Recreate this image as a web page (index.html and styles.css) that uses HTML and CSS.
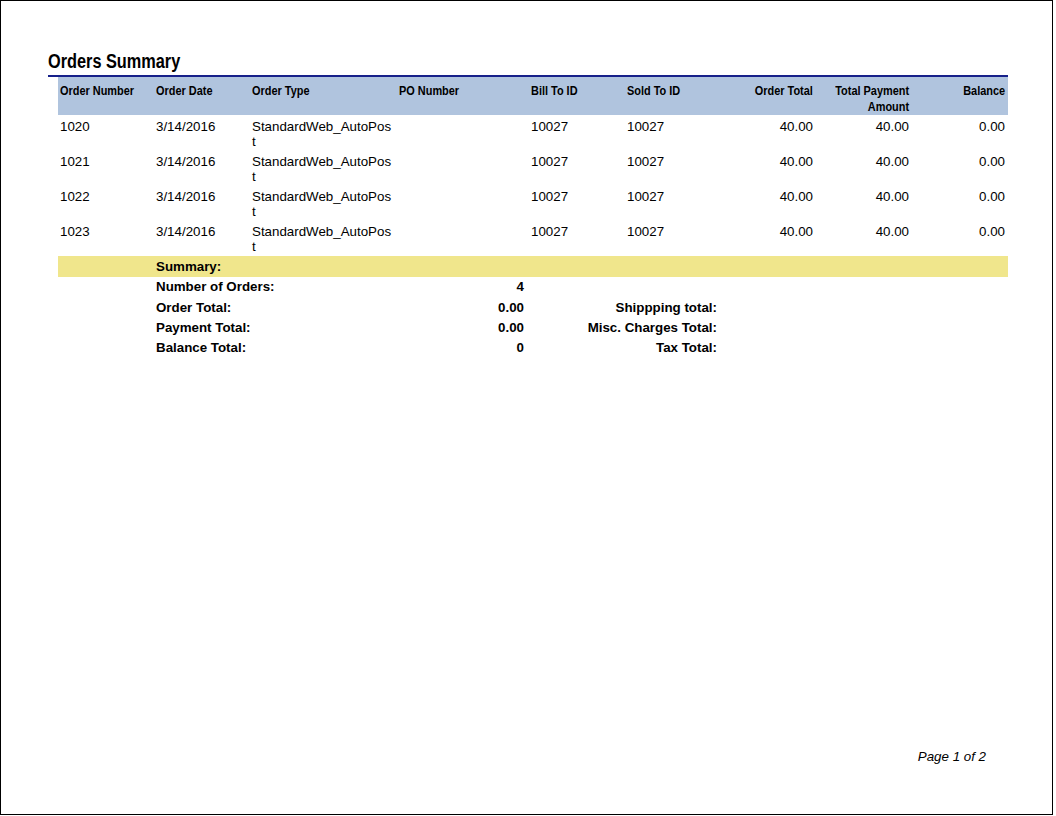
FILE: index.html
```html
<!DOCTYPE html>
<html>
<head>
<meta charset="utf-8">
<title>Orders Summary</title>
<link rel="stylesheet" href="styles.css">
</head>
<body>
<div class="page">
  <h1 class="title"><span class="narrow">Orders Summary</span></h1>
  <div class="grid head">
    <div class="c"><span class="narrow">Order Number</span></div>
    <div class="c"><span class="narrow">Order Date</span></div>
    <div class="c"><span class="narrow">Order Type</span></div>
    <div class="c po"><span class="narrow">PO Number</span></div>
    <div class="c"><span class="narrow">Bill To ID</span></div>
    <div class="c"><span class="narrow">Sold To ID</span></div>
    <div class="c r"><span class="narrow">Order Total</span></div>
    <div class="c r"><span class="narrow">Total Payment<br>Amount</span></div>
    <div class="c r last"><span class="narrow">Balance</span></div>
  </div>
  <div class="grid row">
    <div class="c">1020</div><div class="c">3/14/2016</div><div class="c type">StandardWeb_AutoPost</div><div class="c"></div><div class="c">10027</div><div class="c">10027</div><div class="c r">40.00</div><div class="c r">40.00</div><div class="c r last">0.00</div>
  </div>
  <div class="grid row">
    <div class="c">1021</div><div class="c">3/14/2016</div><div class="c type">StandardWeb_AutoPost</div><div class="c"></div><div class="c">10027</div><div class="c">10027</div><div class="c r">40.00</div><div class="c r">40.00</div><div class="c r last">0.00</div>
  </div>
  <div class="grid row">
    <div class="c">1022</div><div class="c">3/14/2016</div><div class="c type">StandardWeb_AutoPost</div><div class="c"></div><div class="c">10027</div><div class="c">10027</div><div class="c r">40.00</div><div class="c r">40.00</div><div class="c r last">0.00</div>
  </div>
  <div class="grid row">
    <div class="c">1023</div><div class="c">3/14/2016</div><div class="c type">StandardWeb_AutoPost</div><div class="c"></div><div class="c">10027</div><div class="c">10027</div><div class="c r">40.00</div><div class="c r">40.00</div><div class="c r last">0.00</div>
  </div>
  <div class="sum-band"><span>Summary:</span></div>
  <div class="sum">
    <div class="s-row"><span class="s-label">Number of Orders:</span><span class="s-val">4</span><span class="s-label2"></span></div>
    <div class="s-row"><span class="s-label">Order Total:</span><span class="s-val">0.00</span><span class="s-label2">Shippping total:</span></div>
    <div class="s-row"><span class="s-label">Payment Total:</span><span class="s-val">0.00</span><span class="s-label2">Misc. Charges Total:</span></div>
    <div class="s-row"><span class="s-label">Balance Total:</span><span class="s-val">0</span><span class="s-label2">Tax Total:</span></div>
  </div>
  <div class="footer">Page 1 of 2</div>
</div>
</body>
</html>
```

FILE: styles.css
```css
html, body {
  margin: 0;
  padding: 0;
  background: #ffffff;
}

body {
  font-family: "Liberation Sans", Arial, sans-serif;
  font-size: 13.33px;
  color: #000;
}

.page {
  box-sizing: border-box;
  width: 1053px;
  height: 815px;
  border: 1px solid #000;
  padding: 48px 44px 50px 47px;
  display: flex;
  flex-direction: column;
}

/* Arial Narrow look: Liberation Sans Bold compressed horizontally */
.narrow {
  display: inline-block;
  white-space: nowrap;
  transform: scaleX(0.82);
  transform-origin: left center;
}

.title {
  margin: 0;
  font-weight: bold;
  font-size: 20px;
  line-height: 24px;
  padding-bottom: 2px;
  border-bottom: 2px solid #16208a;
}

.title .narrow {
  transform: scaleX(0.815);
}

.grid {
  display: grid;
  grid-template-columns: 96px 96px 144px 135px 96px 96px 96px 96px 95px;
  margin-left: 10px;
}

.head {
  background: #b0c4de;
  height: 38px;
  box-sizing: border-box;
  padding-top: 6px;
  font-weight: bold;
  line-height: 16px;
}

.c {
  padding: 0 2px;
}

.c.r {
  text-align: right;
  padding-right: 4px;
}

.c.r.last {
  padding-right: 3px;
}

.c.r .narrow {
  transform-origin: right center;
  text-align: right;
}

.head .po {
  padding-left: 5px;
}

.row {
  height: 35px;
  box-sizing: border-box;
  padding-top: 4px;
  line-height: 15px;
}

.type {
  word-break: break-all;
}

.sum-band {
  margin: 1px 0 0 10px;
  height: 21px;
  line-height: 21px;
  background: #f0e68c;
  font-weight: bold;
  padding-left: 98px;
}

.sum {
  margin-left: 10px;
  font-weight: bold;
}

.s-row {
  display: grid;
  grid-template-columns: 300px 68px 193px;
  padding-left: 98px;
  height: 20px;
  line-height: 20px;
}

.s-row:nth-child(n+2) {
  line-height: 21px;
}

.s-val,
.s-label2 {
  text-align: right;
}

.footer {
  margin-top: auto;
  align-self: flex-end;
  padding-right: 22px;
  font-style: italic;
  line-height: 15px;
}
```
